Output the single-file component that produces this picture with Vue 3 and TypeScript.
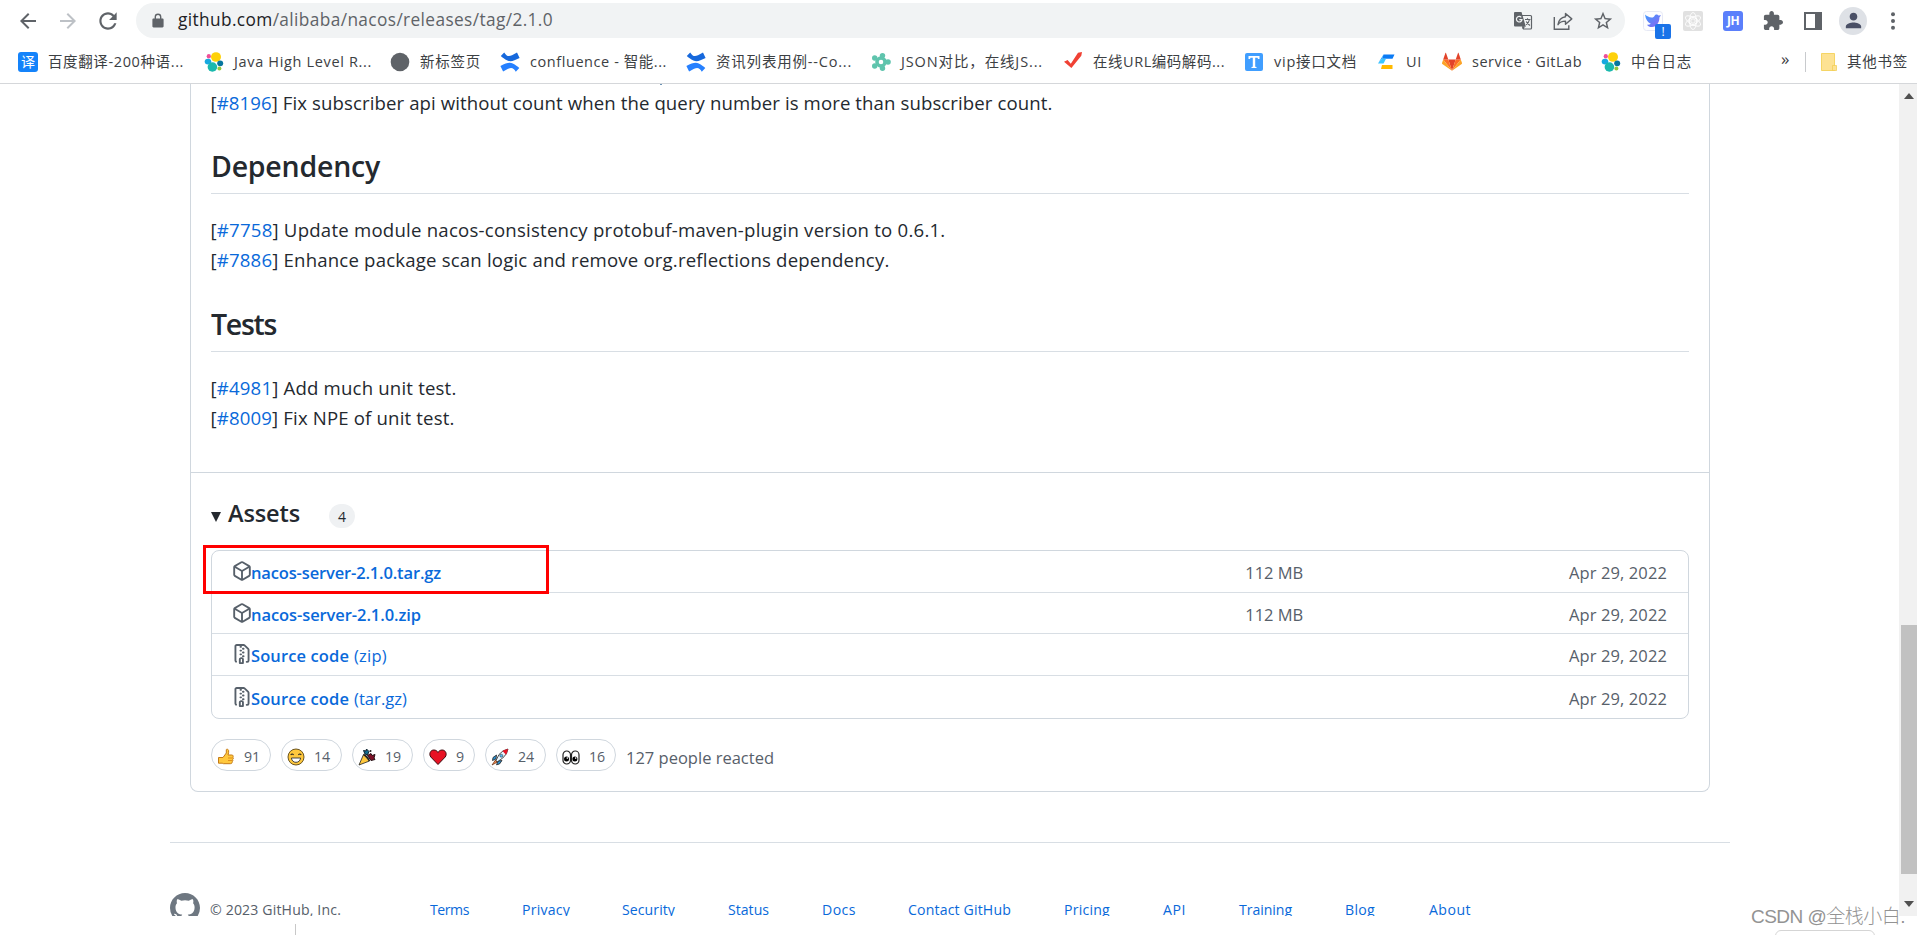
<script setup lang="ts">
import type { Directive } from 'vue'

// Tunes letter spacing so that a label takes up its designed width.
const vFit: Directive<HTMLElement, number> = {
  mounted(el, { value }) {
    const count = (el.textContent ?? '').trim().length
    const width = el.getBoundingClientRect().width
    el.style.letterSpacing = `${(value - width) / count}px`
  },
}

interface Bookmark { icon: string; label: string; width: number; slot: number }
const bookmarks: Bookmark[] = [
  { icon: 'yi', label: '百度翻译-200种语...', width: 136, slot: 186 },
  { icon: 'elastic', label: 'Java High Level R...', width: 138, slot: 186 },
  { icon: 'dot', label: '新标签页', width: 61, slot: 110 },
  { icon: 'confluence', label: 'confluence - 智能...', width: 137, slot: 186 },
  { icon: 'confluence', label: '资讯列表用例--Co...', width: 136, slot: 185 },
  { icon: 'flower', label: 'JSON对比，在线JS...', width: 142, slot: 192 },
  { icon: 'check', label: '在线URL编码解码...', width: 132, slot: 181 },
  { icon: 'tee', label: 'vip接口文档', width: 83, slot: 132 },
  { icon: 'ui', label: 'UI', width: 16, slot: 66 },
  { icon: 'gitlab', label: 'service · GitLab', width: 110, slot: 159 },
  { icon: 'elastic', label: '中台日志', width: 61, slot: 110 },
]

interface Note { id: string; text: string; width: number }
const dependencyNotes: Note[] = [
  { id: '#7758', text: 'Update module nacos-consistency protobuf-maven-plugin version to 0.6.1.', width: 735 },
  { id: '#7886', text: 'Enhance package scan logic and remove org.reflections dependency.', width: 679 },
]
const testNotes: Note[] = [
  { id: '#4981', text: 'Add much unit test.', width: 246 },
  { id: '#8009', text: 'Fix NPE of unit test.', width: 244 },
]

interface Asset { icon: string; name: string; width: number; kind?: string; kindWidth?: number; size?: string }
const assets: Asset[] = [
  { icon: 'package', name: 'nacos-server-2.1.0.tar.gz', width: 190, size: '112 MB' },
  { icon: 'package', name: 'nacos-server-2.1.0.zip', width: 170, size: '112 MB' },
  { icon: 'zip', name: 'Source code', width: 98, kind: '(zip)', kindWidth: 33 },
  { icon: 'zip', name: 'Source code', width: 98, kind: '(tar.gz)', kindWidth: 53 },
]

const reactions = [
  { icon: 'thumb', count: 91, width: 60 },
  { icon: 'smile', count: 14, width: 61 },
  { icon: 'party', count: 19, width: 61 },
  { icon: 'heart', count: 9, width: 52 },
  { icon: 'rocket', count: 24, width: 61 },
  { icon: 'eyes', count: 16, width: 60 },
]

const footerLinks = [
  { label: 'Terms', width: 39, slot: 92 },
  { label: 'Privacy', width: 48, slot: 100 },
  { label: 'Security', width: 53, slot: 106 },
  { label: 'Status', width: 41, slot: 94 },
  { label: 'Docs', width: 34, slot: 86 },
  { label: 'Contact GitHub', width: 103, slot: 156 },
  { label: 'Pricing', width: 46, slot: 99 },
  { label: 'API', width: 23, slot: 76 },
  { label: 'Training', width: 53, slot: 106 },
  { label: 'Blog', width: 30, slot: 84 },
  { label: 'About', width: 42, slot: 60 },
]
</script>

<template>
  <div class="window">
    <header class="chrome">
      <div class="toolbar">
        <span class="slot"><svg class="i24" viewBox="0 0 24 24"><path fill="#5f6368" d="M20 11H7.83l5.59-5.59L12 4l-8 8 8 8 1.41-1.41L7.83 13H20v-2z" /></svg></span>
        <span class="slot"><svg class="i24" viewBox="0 0 24 24"><path fill="#bdc1c6" d="M12 4l-1.41 1.41L16.17 11H4v2h12.17l-5.58 5.59L12 20l8-8z" /></svg></span>
        <span class="slot"><svg class="i26" viewBox="0 0 24 24"><path fill="#5f6368" d="M17.65 6.35C16.2 4.9 14.21 4 12 4c-4.42 0-7.99 3.58-7.99 8s3.57 8 7.99 8c3.73 0 6.84-2.55 7.73-6h-2.08c-.82 2.33-3.04 4-5.65 4-3.31 0-6-2.69-6-6s2.69-6 6-6c1.66 0 3.14.69 4.22 1.78L13 11h7V4l-2.35 2.35z" /></svg></span>
        <div class="omnibox">
          <svg class="lock" viewBox="0 0 12 14"><path fill="#5f6368" d="M6 0a3.4 3.4 0 0 0-3.4 3.4V5H1.5C.9 5 .4 5.5.4 6.100v6.700c0 .7.5 1.200 1.100 1.200h9c.6 0 1.100-.5 1.100-1.200V6.100C11.600 5.500 11.100 5 10.500 5H9.400V3.400A3.400 3.400 0 0 0 6 0zm0 1.400c1.100 0 2 .9 2 2V5H4V3.400c0-1.100.9-2 2-2z" /></svg>
          <span v-fit="375" class="url"><b>github.com</b>/alibaba/nacos/releases/tag/2.1.0</span>
          <span class="slot">
            <svg class="i20" viewBox="0 0 20 20">
              <path d="M8 4.500h9.500a1 1 0 0 1 1 1V17a1 1 0 0 1-1 1H10.500z" fill="#f1f3f4" stroke="#5f6368" stroke-width="1.200" />
              <path d="M2 1h6.500l4.300 14.500H2a1 1 0 0 1-1-1V2a1 1 0 0 1 1-1z" fill="#5f6368" />
              <path d="M9.500 18l3.300-2.500H9z" fill="#5f6368" />
              <path d="M8.300 6.300A2.800 2.800 0 1 0 9 8.600H6.300" fill="none" stroke="#f1f3f4" stroke-width="1.200" />
              <path d="M12 8.500h5.500M14.500 7.300v1.200M16.500 8.500c-.5 2.500-2 4.300-3.500 5.200M13.300 10.500c.8 1.800 2 3 3.700 4" fill="none" stroke="#5f6368" stroke-width="1.100" />
            </svg>
          </span>
          <span class="slot">
            <svg class="i20" viewBox="0 0 20 20" fill="none" stroke="#5f6368" stroke-width="1.400">
              <path d="M1.300 6v12.300h14.500v-4" />
              <path d="M12.500 2.500l6.300 5.400-6.300 5.400v-3.200c-3.700 0-6 1.200-7.500 3.600.6-4.500 3-7.300 7.500-8z" stroke-linejoin="round" />
            </svg>
          </span>
          <span class="slot"><svg class="i22" viewBox="0 0 24 24"><path fill="#5f6368" d="M22 9.240l-7.190-.62L12 2 9.190 8.630 2 9.240l5.460 4.730L5.820 21 12 17.270 18.180 21l-1.630-7.030L22 9.240zM12 15.400l-3.760 2.270 1-4.280-3.320-2.880 4.380-.38L12 6.100l1.710 4.040 4.380.38-3.320 2.880 1 4.280L12 15.400z" /></svg></span>
        </div>
        <span class="slot ext bird">
          <svg class="i20" viewBox="0 0 20 20">
            <defs><linearGradient id="birdFill" x1="0" y1="0" x2="1" y2="1"><stop offset="0" stop-color="#3f9bff" /><stop offset="1" stop-color="#8d62f0" /></linearGradient></defs>
            <rect x=".5" y=".5" width="19" height="19" rx="3" fill="#fdfdff" stroke="#e6e9f5" />
            <path d="M2 3.500c2 1.800 4 2.700 6.500 3C10 6.700 11 6 11.500 5c.8-1.500 3-2 4-.4l2.500-.4-1.600 2.300c.2 4.500-2.900 9.500-7.400 9.500-2.500 0-4-.8-5-2.300 1.700.2 2.900-.1 3.800-1C4.800 11.500 2.700 8.500 2 3.500z" fill="url(#birdFill)" />
          </svg>
          <span class="badge">!</span>
        </span>
        <span class="slot">
          <svg class="i20" viewBox="0 0 20 20">
            <rect width="20" height="20" rx="2" fill="#e1e1e1" />
            <g fill="none" stroke="#fff" stroke-width=".8">
              <circle cx="10" cy="10" r="2.200" /><circle cx="10" cy="10" r="4.300" />
              <ellipse cx="10" cy="10" rx="8.500" ry="3.500" transform="rotate(30 10 10)" />
              <ellipse cx="10" cy="10" rx="8.500" ry="3.500" transform="rotate(90 10 10)" />
              <ellipse cx="10" cy="10" rx="8.500" ry="3.500" transform="rotate(150 10 10)" />
            </g>
          </svg>
        </span>
        <span class="slot"><span class="jh">JH</span></span>
        <span class="slot"><svg class="i20" viewBox="1 1 22 22"><path fill="#5f6368" d="M20.500 11H19V7c0-1.100-.9-2-2-2h-4V3.500C13 2.120 11.880 1 10.500 1S8 2.120 8 3.500V5H4c-1.100 0-1.990.9-1.990 2v3.800H3.500c1.490 0 2.700 1.210 2.700 2.700s-1.210 2.700-2.700 2.700H2V20c0 1.100.9 2 2 2h3.800v-1.500c0-1.490 1.210-2.700 2.700-2.700 1.490 0 2.700 1.210 2.700 2.700V22H17c1.100 0 2-.9 2-2v-4h1.500c1.380 0 2.500-1.120 2.500-2.500S21.880 11 20.500 11z" /></svg></span>
        <span class="slot"><span class="panel"></span></span>
        <span class="slot"><span class="avatar"><svg class="i24" viewBox="0 0 24 24"><path fill="#4a5066" d="M12 12c2.210 0 4-1.790 4-4s-1.790-4-4-4-4 1.790-4 4 1.790 4 4 4zm0 2c-2.670 0-8 1.340-8 4v2h16v-2c0-2.660-5.330-4-8-4z" /></svg></span></span>
        <span class="slot"><svg class="i20" viewBox="0 0 20 20" fill="#5f6368"><circle cx="10" cy="3.200" r="2" /><circle cx="10" cy="10" r="2" /><circle cx="10" cy="16.800" r="2" /></svg></span>
      </div>

      <nav class="bookmarks">
        <span v-for="b in bookmarks" :key="b.label" class="bookmark" :style="{ width: b.slot + 'px' }">
          <span v-if="b.icon === 'yi'" class="yi">译</span>
          <svg v-else-if="b.icon === 'elastic'" class="i20" viewBox="0 0 20 20">
            <ellipse cx="12" cy="5" rx="5" ry="4.800" fill="#fed10a" />
            <ellipse cx="4.800" cy="4.300" rx="2.100" ry="2.200" fill="#ef5098" />
            <ellipse cx="4" cy="9.600" rx="3.300" ry="2.900" fill="#17a8e0" />
            <ellipse cx="16.200" cy="11.300" rx="3" ry="2.900" fill="#07769e" />
            <ellipse cx="8.400" cy="15" rx="4.800" ry="4.700" fill="#1bb9ae" />
            <ellipse cx="15.400" cy="16.600" rx="2" ry="2" fill="#93c83e" />
          </svg>
          <svg v-else-if="b.icon === 'dot'" class="i20" viewBox="0 0 20 20"><circle cx="10" cy="10" r="9.300" fill="#5f6368" /></svg>
          <svg v-else-if="b.icon === 'confluence'" class="i20" viewBox="0 0 20 20">
            <path d="M4.200.4C6.500 4 8.300 5 12 3.300L17 .6l2.600 5.500c-6 3.100-9 3.900-12.200 2.400C4.500 7.300 2.600 5.500.8 4z" fill="#1668dc" />
            <path d="M15.800 19.700c-2.200-3.600-4-4.600-7.700-2.900l-5 2.700L.4 14c6-3.100 9.200-4 12.400-2.500 2.700 1.200 4.700 3 6.500 4.500z" fill="#2680ff" />
          </svg>
          <svg v-else-if="b.icon === 'flower'" class="i20" viewBox="0 0 20 20" fill="#5fc4ad">
            <path fill-rule="evenodd" d="M10 4.200a5.800 5.800 0 1 0 0 11.600 5.800 5.800 0 0 0 0-11.600zm0 3.500a2.300 2.300 0 1 1 0 4.600 2.300 2.300 0 0 1 0-4.600z" />
            <circle cx="11.500" cy="3.600" r="2.700" /><circle cx="17" cy="10" r="2.800" /><circle cx="11.500" cy="16.300" r="2.700" /><circle cx="3.700" cy="14" r="2.700" /><circle cx="3.700" cy="6" r="2.700" />
          </svg>
          <svg v-else-if="b.icon === 'check'" class="i20" viewBox="0 0 20 20"><path d="M1 9.800l3.600-1.700 3.200 3.600L15 .8l4-.8-.7 3.800L8.400 16z" fill="#f04134" /></svg>
          <span v-else-if="b.icon === 'tee'" class="tee"><svg class="i14" viewBox="0 0 14 14"><path d="M1.500 1h11v3H11l-.5-1.200H8.200v9l1.300.3v1H4.500v-1l1.300-.3v-9H3.500L3 4H1.500z" fill="#fff" /></svg></span>
          <svg v-else-if="b.icon === 'ui'" class="i20" viewBox="0 0 20 20">
            <path d="M7.500 2.500h11l-2 4.200H6z" fill="#0b7bf5" /><path d="M6 6.700h4L7.500 11.500H2z" fill="#39c7ff" /><path d="M7.500 2.500L6 6.700 2 11.500z" fill="#1ba6ff" /><path d="M6 12.900h10.500v4.200H5z" fill="#ffb900" />
          </svg>
          <svg v-else class="i20" viewBox="0 0 20 20">
            <path d="M10 18.800L13.700 7.500H6.300z" fill="#e24329" /><path d="M10 18.800L6.300 7.500H1.200z" fill="#fc6d26" /><path d="M10 18.800L13.700 7.500h5.100z" fill="#fc6d26" />
            <path d="M1.200 7.500L0 11c-.1.400 0 .8.300 1L10 18.800zM18.800 7.500L20 11c.1.400 0 .8-.3 1L10 18.800z" fill="#fca326" />
            <path d="M1.200 7.500h5.100L4 1c-.1-.3-.5-.3-.6 0zM18.800 7.500h-5.100L16 1c.1-.3.5-.3.6 0z" fill="#e24329" />
          </svg>
          <span v-fit="b.width" class="label">{{ b.label }}</span>
        </span>
        <span class="more">»</span>
        <span class="divider"></span>
        <span class="folder"><svg class="i20" viewBox="0 0 20 20"><path d="M1.500 1.500h13v17h-13z" fill="#fde293" stroke="#f5d565" /><path d="M12.500 13.500h4v5h-4z" fill="#fde293" stroke="#f0cc50" stroke-width=".7" /></svg></span>
        <span v-fit="61" class="label">其他书签</span>
      </nav>
    </header>

    <div class="viewport">
      <main class="page">
        <article class="release">
          <section class="notes">
            <i class="descender"></i>
            <p v-fit="842">[<a>#8196</a>] Fix subscriber api without count when the query number is more than subscriber count.</p>
            <h2><span v-fit="169">Dependency</span></h2>
            <p v-for="n in dependencyNotes" :key="n.id" v-fit="n.width">[<a>{{ n.id }}</a>] {{ n.text }}</p>
            <h2 class="tests"><span v-fit="65">Tests</span></h2>
            <p v-for="n in testNotes" :key="n.id" v-fit="n.width">[<a>{{ n.id }}</a>] {{ n.text }}</p>
          </section>
          <section class="assets">
            <h3 class="summary">
              <span class="caret"></span>
              <span v-fit="72" class="title">Assets</span>
              <span class="counter">4</span>
            </h3>
            <ul class="list">
              <li v-for="(a, i) in assets" :key="i" class="row">
                <svg v-if="a.icon === 'package'" class="i20" viewBox="0 0 16 16"><path fill="#57606a" d="m8.878.392 5.250 3.045c.54.314.872.89.872 1.514v6.098a1.750 1.750 0 0 1-.872 1.514l-5.250 3.045a1.750 1.750 0 0 1-1.756 0l-5.250-3.045A1.750 1.750 0 0 1 1 11.049V4.951c0-.624.332-1.201.872-1.514L7.122.392a1.750 1.750 0 0 1 1.756 0ZM7.875 1.690l-4.630 2.685L8 7.133l4.755-2.758-4.630-2.685a.248.248 0 0 0-.25 0ZM2.500 5.677v5.372c0 .09.047.171.125.216l4.625 2.683V8.432Zm6.250 8.271 4.625-2.683a.25.25 0 0 0 .125-.216V5.677L8.750 8.432Z" /></svg>
                <svg v-else class="i20" viewBox="0 0 16 16"><path fill="#57606a" d="M3.500 1.750v11.500c0 .09.048.173.126.217a.75.75 0 0 1-.752 1.298A1.748 1.748 0 0 1 2 13.250V1.750C2 .784 2.784 0 3.750 0h5.586c.464 0 .909.185 1.237.513l2.914 2.914c.329.328.513.773.513 1.237v8.586A1.750 1.750 0 0 1 12.250 15h-.5a.75.75 0 0 1 0-1.500h.5a.25.25 0 0 0 .25-.25V4.664a.25.25 0 0 0-.073-.177L9.513 1.573a.25.25 0 0 0-.177-.073H7.250a.75.75 0 0 1 0 1.500h-.5a.75.75 0 0 1 0-1.500h-3a.25.25 0 0 0-.25.25Zm3.750 8.750h.5c.966 0 1.750.784 1.750 1.750v3a.75.75 0 0 1-.75.75h-2.500a.75.75 0 0 1-.75-.75v-3c0-.966.784-1.750 1.750-1.750ZM6 5.250a.75.75 0 0 1 .75-.75h.5a.75.75 0 0 1 0 1.500h-.5A.75.75 0 0 1 6 5.250Zm.75 2.250h.5a.75.75 0 0 1 0 1.500h-.5a.75.75 0 0 1 0-1.500ZM8 6.750A.75.75 0 0 1 8.750 6h.5a.75.75 0 0 1 0 1.500h-.5A.75.75 0 0 1 8 6.750ZM8.750 3h.5a.75.75 0 0 1 0 1.500h-.5a.75.75 0 0 1 0-1.500ZM8 9.750A.75.75 0 0 1 8.750 9h.5a.75.75 0 0 1 0 1.500h-.5A.75.75 0 0 1 8 9.750Zm-1 2.500v2.250h1v-2.250a.25.25 0 0 0-.25-.25h-.5a.25.25 0 0 0-.25.25Z" /></svg>
                <a class="file"><b v-fit="a.width">{{ a.name }}</b><span v-if="a.kind" v-fit="a.kindWidth ?? 0" class="kind">{{ a.kind }}</span></a>
                <span class="size"><span v-if="a.size" v-fit="58">{{ a.size }}</span></span>
                <span class="date"><span v-fit="98">Apr 29, 2022</span></span>
              </li>
              <li class="highlight"></li>
            </ul>
            <div class="reactions">
              <span v-for="r in reactions" :key="r.icon" class="reaction" :style="{ width: r.width + 'px' }">
                <svg class="emoji" viewBox="0 0 18 18" stroke-linejoin="round">
                  <g v-if="r.icon === 'thumb'"><path d="M1.500 9.500H6L9.300 5V1.700c0-.8 2-.7 2.300.8.200 1.500 0 3-.6 4.500h3.800c1.500 0 1.700 1.500 1 2.200.8.800.6 1.900-.2 2.400.5.800.2 1.800-.5 2.200.2 1.200-.4 1.900-1.700 1.900H6.500l-1.300-.5H1.500z" fill="#ffc83d" stroke="#c47a17" /><path d="M11 10h4.500M11 12.500h4" stroke="#e08f1b" /></g>
                  <g v-else-if="r.icon === 'smile'"><circle cx="9" cy="9" r="8" fill="#ffc83d" stroke="#5a4514" stroke-width=".9" /><path d="M3.700 7q1.400-1.900 2.900 0M11.400 7q1.400-1.900 2.900 0" fill="none" stroke="#222" stroke-width="1.100" /><path d="M4.400 10h9.200c-.4 2.900-2.200 4.300-4.600 4.300S4.800 12.900 4.400 10z" fill="#fff" stroke="#333" stroke-width=".9" /></g>
                  <g v-else-if="r.icon === 'party'"><path d="M1 17L5.500 6.500l6 6.500z" fill="#ffc83d" stroke="#222" stroke-width=".8" /><path d="M5.500 6.500q3.500 1.500 6 6.500" fill="none" stroke="#222" stroke-width="1.500" /><path d="M7 6L5.500 2.500 8 3l.5-2L11 3.500 9.500 7z" fill="#126b8e" stroke="#10212b" /><path d="M9.500 7.500L13 5.500l1 2 3-1-1 3.500 1 1.500-4 1z" fill="#7d1026" stroke="#241014" /><circle cx="12.500" cy="3" r="1" fill="#222" /></g>
                  <g v-else-if="r.icon === 'heart'"><path d="M9 16.500L1.800 9C-.5 5.800 1.600 2 4.800 2 6.800 2 8.200 3 9 4.500 9.800 3 11.200 2 13.200 2c3.200 0 5.300 3.800 3 7z" fill="#e81224" stroke="#3b0a0e" /></g>
                  <g v-else-if="r.icon === 'rocket'"><path d="M5.500 7L2 9.500l-.5 3L5 11zM11 12.500L8.500 16l-3 .8L7 13z" fill="#2a8fd0" stroke="#222" stroke-width=".8" /><path d="M5 12.500L8 6.500q3.500-4.500 9-5.500-.5 5-5.200 9L6 14z" fill="#e8f5fd" stroke="#222" stroke-width=".8" /><path d="M11.500 2.900Q14 1.400 17 1q-.4 3-2 5.700z" fill="#e81224" /><circle cx="10.300" cy="7.700" r="1.500" fill="#56b9ee" stroke="#222" stroke-width=".5" /><path d="M4.500 12L1 17l5-2.700z" fill="#f7894a" stroke="#5a2b13" stroke-width=".7" /></g>
                  <g v-else><rect x="1" y="3" width="7.500" height="13" rx="3.700" fill="#fff" stroke="#222" stroke-width="1.200" /><rect x="9.500" y="3" width="7.500" height="13" rx="3.700" fill="#fff" stroke="#222" stroke-width="1.200" /><circle cx="4.500" cy="11" r="2.500" /><circle cx="12.900" cy="11" r="2.500" /><circle cx="5.300" cy="10.100" r=".8" fill="#fff" /><circle cx="13.700" cy="10.100" r=".8" fill="#fff" /></g>
                </svg>
                <span>{{ r.count }}</span>
              </span>
              <span v-fit="148" class="total">127 people reacted</span>
            </div>
          </section>
        </article>

        <footer class="footer">
          <svg class="octocat" viewBox="0 0 16 16"><path fill="#6e7781" d="M8 0c4.420 0 8 3.580 8 8a8.013 8.013 0 0 1-5.450 7.590c-.4.08-.55-.17-.55-.38 0-.27.01-1.130.01-2.200 0-.75-.25-1.230-.54-1.480 1.780-.2 3.650-.88 3.650-3.950 0-.88-.31-1.590-.82-2.150.08-.2.36-1.020-.08-2.120 0 0-.67-.22-2.200.82-.64-.18-1.320-.27-2-.27-.68 0-1.360.09-2 .27-1.530-1.030-2.200-.82-2.200-.82-.44 1.100-.16 1.920-.08 2.120-.51.56-.82 1.280-.82 2.150 0 3.060 1.860 3.750 3.640 3.950-.23.2-.44.55-.51 1.070-.46.21-1.610.55-2.330-.66-.15-.24-.6-.83-1.230-.82-.67.01-.27.38.01.53.34.19.73.9.82 1.130.16.45.68 1.310 2.690.94 0 .67.01 1.300.01 1.490 0 .21-.15.45-.55.38A7.995 7.995 0 0 1 0 8c0-4.420 3.580-8 8-8Z" /></svg>
          <span class="copyright"><span v-fit="131">© 2023 GitHub, Inc.</span></span>
          <a v-for="l in footerLinks" :key="l.label" class="flink" :style="{ width: l.slot + 'px' }"><span v-fit="l.width">{{ l.label }}</span></a>
        </footer>
      </main>
      <aside class="scrollbar">
        <svg class="arrow" viewBox="0 0 10 6"><path d="M0 6l5-6 5 6z" fill="#505050" /></svg>
        <span class="thumb"></span>
        <svg class="arrow" viewBox="0 0 10 6"><path d="M0 0h10L5 6z" fill="#505050" /></svg>
      </aside>
    </div>
    <span class="tick"></span>
    <span class="peek"></span>
    <span v-fit="154" class="watermark">CSDN @全栈小白.</span>
  </div>
</template>

<style>
html, body { background: #fff; overflow: hidden; }
</style>

<style scoped>
.window { position: relative; width: 1917px; height: 935px; overflow: hidden; background: #fff; color: #24292f; font-family: "Open Sans", "Noto Sans CJK SC", sans-serif; }
.window * { box-sizing: border-box; }
.window svg { display: block; flex: none; }
.window a { color: #0969da; }
.i14 { width: 14px; height: 14px; }
.i20 { width: 20px; height: 20px; }
.i22 { width: 22px; height: 22px; }
.i24 { width: 24px; height: 24px; }
.i26 { width: 26px; height: 26px; }
.chrome { height: 84px; border-bottom: 1px solid #d5d7da; }
.toolbar { display: flex; align-items: center; height: 41px; padding-left: 8px; }
.slot { display: flex; flex: none; align-items: center; justify-content: center; width: 40px; height: 36px; }
.omnibox { display: flex; flex: none; align-items: center; width: 1489px; height: 35px; margin: 0 8px; padding: 0 2px 0 16px; border-radius: 18px; background: #f1f3f4; }
.lock { width: 12px; height: 15px; margin-right: 14px; }
.url { font-size: 17.300px; line-height: 34px; margin-top: -2px; white-space: nowrap; color: #5f6368; }
.url b { font-weight: 400; color: #202124; }
.url + .slot { margin-left: auto; }
.ext { position: relative; }
.badge { position: absolute; left: 22px; top: 21px; width: 16px; height: 15px; border-radius: 2px; background: #1a73e8; color: #fff; font-size: 12px; line-height: 15px; text-align: center; }
.jh { width: 20px; height: 20px; border-radius: 3px; background: #5b7ffb; color: #fff; font: 700 12px/20px "Open Sans", sans-serif; text-align: center; letter-spacing: -.5px; }
.panel { width: 18px; height: 18px; border: 2.500px solid #5f6368; border-right-width: 7px; }
.avatar { display: flex; align-items: center; justify-content: center; width: 28px; height: 28px; border-radius: 50%; background: #dee1e6; }
.avatar svg { width: 23px; height: 23px; }
.bookmarks { display: flex; align-items: center; height: 41px; padding-left: 18px; font-size: 15px; color: #3c4043; }
.bookmark { display: flex; flex: none; align-items: center; gap: 10px; }
.label { flex: none; font-size: 14.500px; line-height: 24px; white-space: nowrap; }
.yi { width: 20px; height: 20px; border-radius: 3px; background: #1483fa; color: #fff; font-size: 14px; line-height: 19px; text-align: center; }
.tee { display: flex; align-items: center; justify-content: center; width: 18px; height: 18px; margin: 0 1px; border-radius: 2px; background: #409eff; }
.more { width: 12px; margin-left: 70px; font-size: 17px; line-height: 20px; margin-top: -5px; }
.divider { width: 1px; height: 20px; margin: 0 14px 0 12px; background: #c8cacd; }
.folder { margin-right: 7px; }
.viewport { display: flex; height: 832px; overflow: hidden; }
.page { width: 1899px; flex: none; }
.release { width: 1520px; height: 708px; margin-left: 190px; border: 1px solid #d0d7de; border-top: 0; border-radius: 0 0 8px 8px; }
.notes { position: relative; height: 389px; padding: 4px 20px 0; border-bottom: 1px solid #d0d7de; }
.descender { position: absolute; left: 469px; top: 0; width: 2px; height: 1px; background: #6c93b5; }
.notes p { display: table; margin: 0 0 0 -.5px; font-size: 18.600px; line-height: 30px; white-space: nowrap; }
.notes h2 { height: 47px; margin: 29px 0 21px; border-bottom: 1px solid #d8dee4; font-size: 28.500px; font-weight: 600; line-height: 38px; }
.notes h2.tests { margin-top: 30px; }
.notes h2 span { display: inline-block; white-space: nowrap; }
.assets { padding: 24px 20px 0; }
.summary { display: flex; align-items: center; height: 32px; margin: 0 0 21px; }
.caret { width: 0; height: 0; margin: 7px 7px 0 0; border: 5.500px solid transparent; border-top: 10px solid #24292f; border-bottom: 0; }
.title { font-size: 23.500px; font-weight: 600; line-height: 32px; white-space: nowrap; }
.counter { width: 26px; height: 24px; margin: 6px 0 0 29px; border-radius: 12px; background: #eff1f3; font-size: 14px; font-weight: 500; line-height: 25px; text-align: center; }
.list { position: relative; height: 169px; margin: 0; padding: 0; border: 1px solid #d0d7de; border-radius: 8px; list-style: none; }
.row { display: flex; align-items: center; height: 42px; padding: 0 21px 0 20px; font-size: 16.500px; border-bottom: 1px solid #d8dee4; }
.row:nth-child(2) { height: 41px; }
.row:nth-child(4) { border-bottom: 0; }
.row .i20 { margin-top: -1px; }
.row span, .row b { white-space: nowrap; }
.file { display: flex; width: 995px; margin-left: -1px; padding-top: 2px; }
.file b { font-weight: 600; }
.kind { margin-left: 5px; }
.size, .date { padding-top: 2px; color: #57606a; }
.size { width: 324px; }
.size > span, .date > span { display: inline-block; }
.highlight { position: absolute; left: -9px; top: -6px; width: 346px; height: 49px; border: 3px solid #f00; }
.reactions { display: flex; align-items: center; gap: 10px; margin-top: 20px; }
.reaction { display: flex; align-items: center; gap: 9px; height: 32px; padding: 3px 0 0 5px; border: 1px solid #d0d7de; border-radius: 16px; color: #57606a; font-size: 14.200px; line-height: 26px; }
.emoji { width: 18px; height: 18px; }
.total { margin: 5px 0 0 0; color: #57606a; font-size: 16.500px; line-height: 26px; white-space: nowrap; }
.footer { display: flex; width: 1560px; margin: 50px 0 0 170px; padding-top: 50px; border-top: 1px solid #d8dee4; font-size: 14.100px; line-height: 20px; white-space: nowrap; }
.octocat { width: 30px; height: 30px; margin-right: 10px; }
.copyright { width: 220px; padding-top: 7px; color: #57606a; }
.flink { flex: none; padding-top: 7px; }
.copyright span, .flink span { display: inline-block; }
.scrollbar { display: flex; flex-direction: column; align-items: center; width: 18px; padding: 9px 0 9px; background: #f1f1f1; }
.arrow { width: 10px; height: 6px; margin-left: 2px; }
.thumb { width: 16px; height: 249px; margin: 526px 0 auto 2px; background: #c1c1c1; }
.tick { position: absolute; left: 295px; top: 924px; width: 1px; height: 11px; background: #c8c8c8; }
.peek { position: absolute; left: 1775px; top: 930px; width: 100px; height: 20px; border: 1px solid #d5d5d5; border-radius: 6px; }
.watermark { position: absolute; left: 1751px; top: 904px; color: #939393; font: 300 19px/26px "Liberation Sans", "Noto Sans CJK SC", sans-serif; white-space: nowrap; text-shadow: 1px 1px 0 #fff; }
</style>
